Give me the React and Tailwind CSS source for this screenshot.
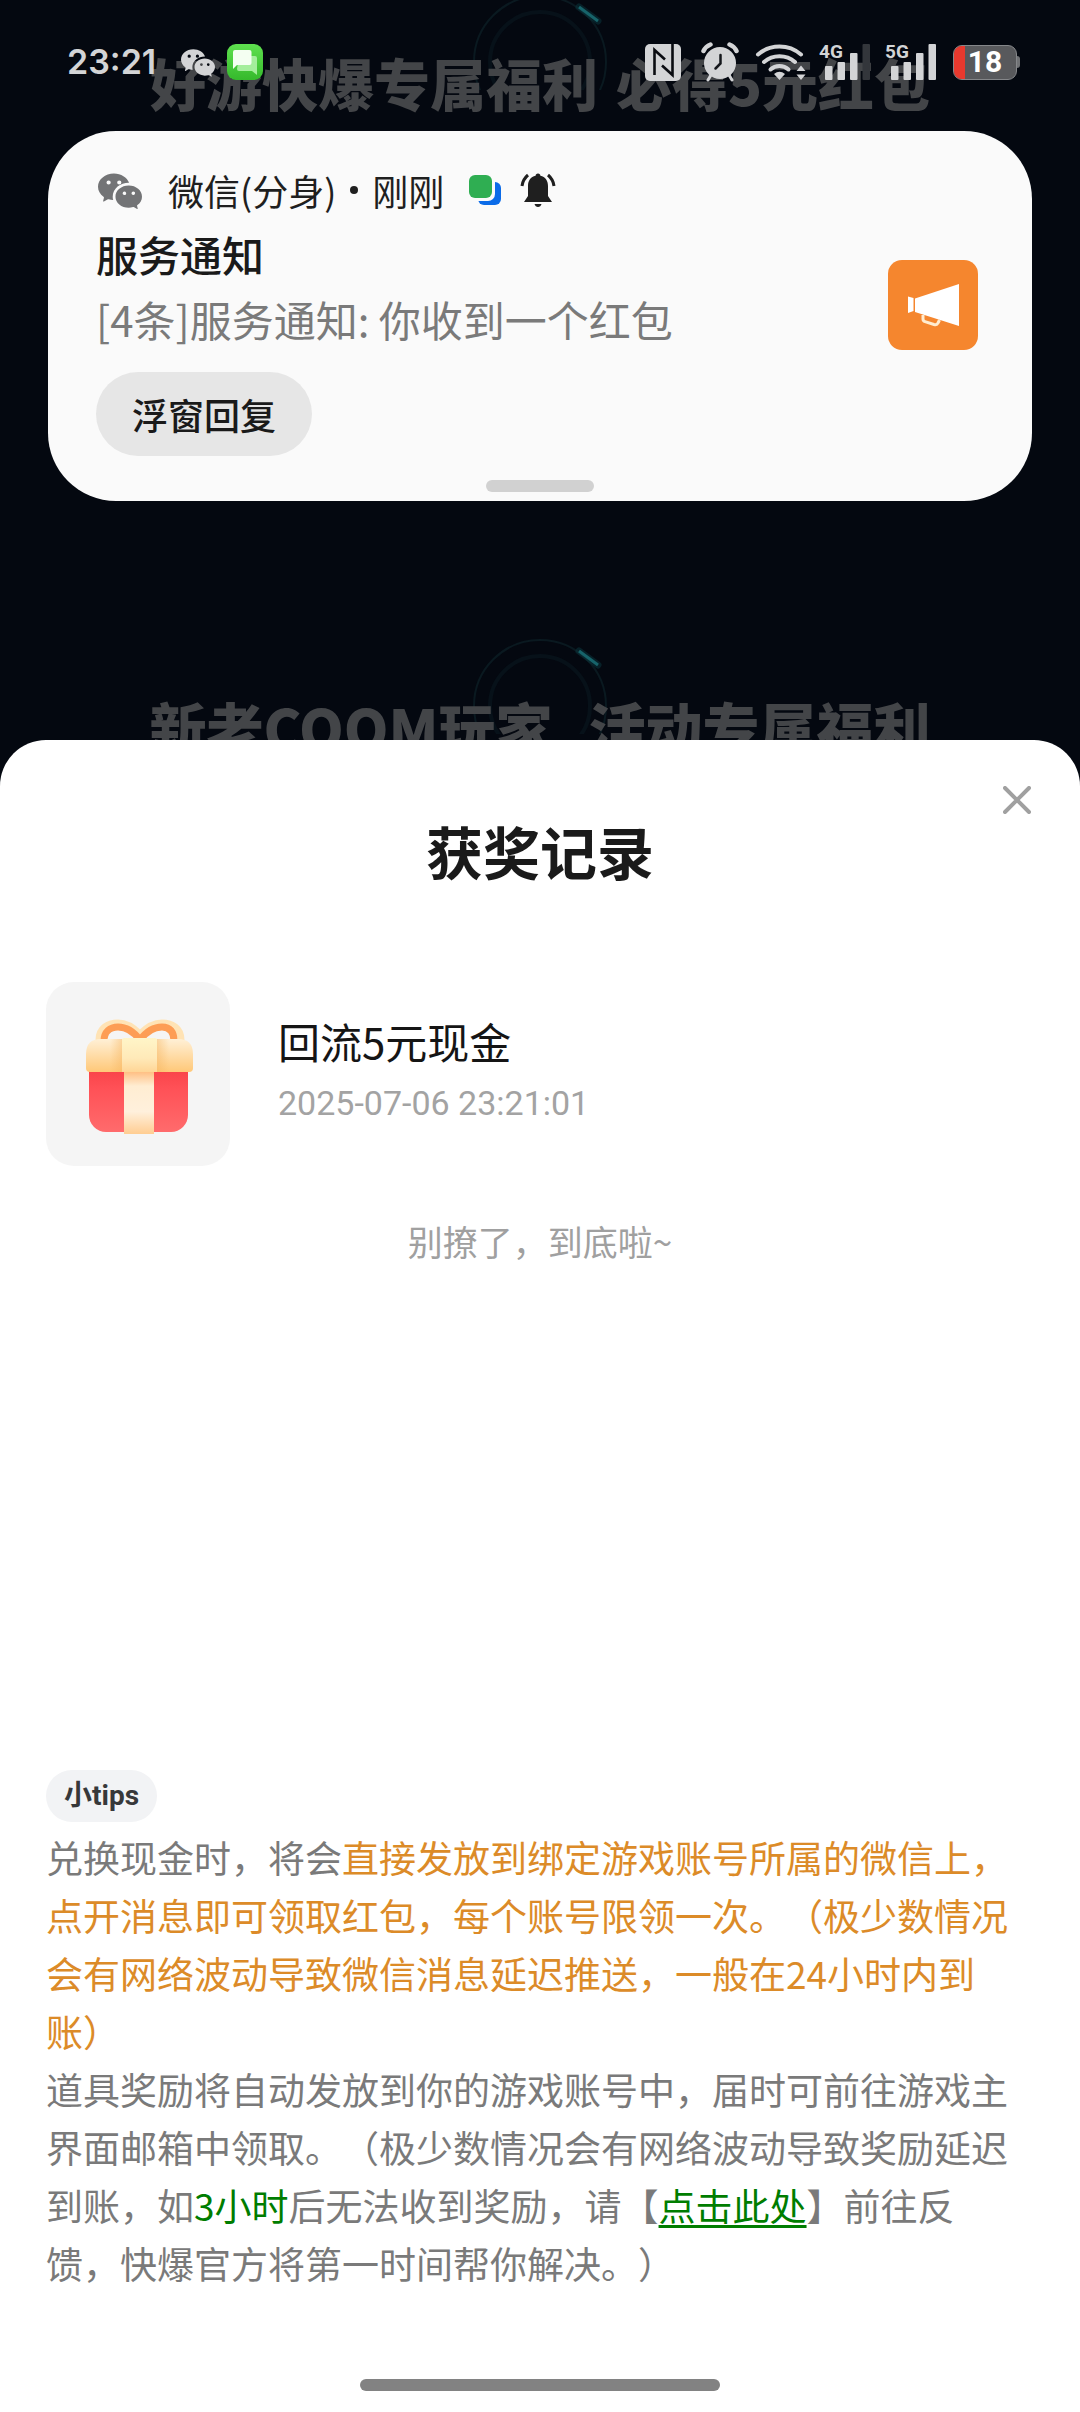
import React, { useState } from 'react';
import { BsWechat } from 'react-icons/bs';

const records = [
  { id: 1, name: '回流5元现金', time: '2025-07-06 23:21:01' },
];

function SmsIcon() {
  return (
    <svg viewBox="0 0 36 36" className="size-9" aria-hidden="true">
      <defs>
        <linearGradient id="sms" x1="0" y1="0" x2="0" y2="1">
          <stop offset="0" stopColor="#5fe04f" />
          <stop offset="1" stopColor="#35b92c" />
        </linearGradient>
      </defs>
      <rect width="36" height="36" rx="9" fill="url(#sms)" />
      <path d="M12 12h16a2 2 0 0 1 2 2v17l-5-4H12a2 2 0 0 1-2-2z" fill="#a4ee9c" />
      <path d="M8 6h14.500a2 2 0 0 1 2 2v11a2 2 0 0 1-2 2H10l-4 4V8a2 2 0 0 1 2-2z" fill="#f4fff2" />
    </svg>
  );
}

function NfcIcon() {
  return (
    <svg viewBox="0 0 36 37" className="h-[37px] w-9" aria-hidden="true">
      <rect width="36" height="37" rx="5" fill="#d3d4d6" />
      <path d="M9.500 31V6L20 15.500M27.500 0V31L17 21.500" fill="none" stroke="#0a0c11" strokeWidth="2.600" />
    </svg>
  );
}

function AlarmIcon() {
  return (
    <svg viewBox="0 0 38 40" className="h-10 w-[38px]" aria-hidden="true">
      <circle cx="19" cy="21" r="16" fill="#d3d4d6" />
      <path d="M2.500 9a13 13 0 0 1 7-6.500M35.500 9a13 13 0 0 0-7-6.500" fill="none" stroke="#d3d4d6" strokeWidth="4.500" strokeLinecap="round" />
      <path d="M10 33l-3 5M28 33l3 5" stroke="#d3d4d6" strokeWidth="3" strokeLinecap="round" />
      <path d="M19.500 13v8.500l-5 5" fill="none" stroke="#15171c" strokeWidth="2.500" strokeLinecap="round" />
    </svg>
  );
}

function WifiIcon() {
  return (
    <svg viewBox="0 0 52 38" className="h-[38px] w-[52px]" aria-hidden="true">
      <g fill="none" stroke="#d3d4d6" strokeWidth="4" strokeLinecap="round">
        <path d="M3 11.500a33 33 0 0 1 43 0" />
        <path d="M9 19a23.500 23.500 0 0 1 31 0" />
        <path d="M15.500 26.500a13 13 0 0 1 18 0" />
      </g>
      <path d="M24.500 37l-5.500-6q5.500-4.500 11 0z" fill="#d3d4d6" />
      <path d="M46 22.500l4.500 5.500h-9zM46 37l4.500-5.500h-9z" fill="#d3d4d6" />
    </svg>
  );
}

function SignalIcon({ label, bars }) {
  const heights = [14, 18, 27, 36];
  return (
    <svg viewBox="0 0 54 38" className="h-[38px] w-[54px]" role="img" aria-label={label}>
      {heights.map((h, i) => (
        <rect key={h} x={6 + i * 12.500} y={37 - h} width="7.500" height={h} rx="1" fill={i < bars ? '#d3d4d6' : '#33363b'} />
      ))}
      <text x="0" y="15" fill="#d3d4d6" className="font-['Roboto',sans-serif] text-[19px] font-bold">{label}</text>
    </svg>
  );
}

function Battery({ level }) {
  return (
    <div className="flex items-center">
      <div className="relative flex h-[35px] w-16 items-center justify-center overflow-hidden rounded-[9px] border border-[#85878a] bg-[#58595c]">
        <div className="absolute inset-y-0 left-0 bg-[#e8392e]" style={{ width: `${level}%` }} />
        <span className="relative font-['Roboto',sans-serif] text-[30px] leading-8 font-bold text-white">{level}</span>
      </div>
      <div className="h-3 w-[3px] rounded-r-sm bg-[#707275]" />
    </div>
  );
}

function StatusBar() {
  return (
    <div className="relative flex h-[124px] items-center justify-between pr-[60px] pl-[67px]">
      <div className="flex items-center">
        <span className="w-[90px] font-['Inter',sans-serif] text-[34px] leading-none font-semibold text-[#d3d4d6]">23:21</span>
        <BsWechat className="ml-6 size-[34px] text-[#d3d4d6]" />
        <span className="ml-3"><SmsIcon /></span>
      </div>
      <div className="flex items-center">
        <NfcIcon />
        <span className="ml-5"><AlarmIcon /></span>
        <span className="ml-4"><WifiIcon /></span>
        <span className="ml-3"><SignalIcon label="4G" bars={3} /></span>
        <span className="ml-3"><SignalIcon label="5G" bars={4} /></span>
        <span className="ml-[14px]"><Battery level={18} /></span>
      </div>
    </div>
  );
}

// dimmed section title of the activity page under the mask
function SectionTitle({ children, className }) {
  return (
    <div className={`absolute inset-x-0 flex justify-center ${className}`}>
      <svg viewBox="0 0 160 100" className="absolute -top-[60px] h-[100px] w-40" aria-hidden="true">
        <circle cx="80" cy="72" r="66" fill="none" stroke="#0a1920" strokeWidth="2" />
        <circle cx="80" cy="72" r="50" fill="none" stroke="#071119" strokeWidth="4" />
        <path d="M119 17l19 14" stroke="#0b3940" strokeWidth="7" opacity="0.5" strokeLinecap="round" />
        <path d="M119 17l19 14" stroke="#17636a" strokeWidth="3" />
      </svg>
      <p className="relative flex leading-[64px] font-black whitespace-nowrap text-[#434548]">{children}</p>
    </div>
  );
}

function DualAppIcon() {
  return (
    <svg viewBox="0 0 34 34" className="size-[34px]" aria-hidden="true">
      <rect x="10" y="9" width="23" height="23" rx="6" fill="#0b6be8" />
      <rect x="0" y="1" width="27" height="27" rx="7" fill="#fafafa" />
      <rect x="1" y="2" width="23" height="23" rx="6" fill="#2fae52" />
    </svg>
  );
}

function BellIcon() {
  return (
    <svg viewBox="0 0 36 36" className="size-9" aria-hidden="true">
      <path d="M18 1.500c1.600 0 2.300 1 2.400 2.200 5 1.200 7.600 4.800 7.600 10.300v10l4 6H4l4-6V14c0-5.500 2.600-9.100 7.600-10.300.1-1.200.8-2.200 2.400-2.200z" fill="#1f1f1f" />
      <path d="M14.500 32h7c-.6 2-1.800 3-3.500 3s-2.900-1-3.500-3z" fill="#1f1f1f" />
      <path d="M8 3C4.500 6 2.500 9.500 2 14M28 3c3.500 3 5.500 6.500 6 11" fill="none" stroke="#1f1f1f" strokeWidth="3" />
    </svg>
  );
}

function MegaphoneIcon() {
  return (
    <svg viewBox="0 0 90 90" className="size-[90px]" aria-hidden="true">
      <rect width="90" height="90" rx="14" fill="#f5862e" />
      <path d="M27 38.500L71 24v42L27 52z" fill="#fff" />
      <path d="M20 36.500l5.500 1.500v13L20 53z" fill="#fff" />
      <path d="M35 55v4q0 2 2 2.600l9 2.900q3 .8 4-1.500l1.500-3" fill="none" stroke="#ffeccf" strokeWidth="3" />
    </svg>
  );
}

function Notification() {
  return (
    <section className="relative mx-12 mt-[7px] rounded-[68px] bg-[#fafafa] px-12 pt-[35px] pb-[9px]">
      <div className="flex items-start justify-between">
        <div>
          <div className="flex h-12 items-center text-[36px] text-[#1f1f1f]">
            <BsWechat className="ml-0.5 size-11 text-[#737476]" />
            <span className="ml-[26px]">微信(分身)</span>
            <span className="mx-[14px] size-2 rounded-full bg-[#1f1f1f]" />
            <span>刚刚</span>
            <span className="ml-6"><DualAppIcon /></span>
            <span className="ml-[18px]"><BellIcon /></span>
          </div>
          <h2 className="mt-2 text-[42px] leading-[64px] font-medium text-[#1a1a1a]">服务通知</h2>
          <p className="text-[42px] leading-[66px] text-[#7a7a7a]">[4条]服务通知: 你收到一个红包</p>
          <button type="button" className="mt-5 h-[84px] rounded-full bg-[#e6e6e6] px-9 text-[36px] font-medium text-[#1a1a1a]">
            浮窗回复
          </button>
        </div>
        <div className="mt-[94px] mr-[6px]">
          <MegaphoneIcon />
        </div>
      </div>
      <div className="mx-auto mt-6 h-3 w-[108px] rounded-full bg-[#d1d1d1]" />
    </section>
  );
}

function GiftIcon() {
  return (
    <svg viewBox="0 0 184 184" className="size-[184px]" aria-hidden="true">
      <defs>
        <linearGradient id="lid" x1="0" y1="0" x2="0" y2="1">
          <stop offset="0" stopColor="#fff0d6" />
          <stop offset="1" stopColor="#ffc878" />
        </linearGradient>
        <linearGradient id="knot" x1="0" y1="0" x2="0" y2="1">
          <stop offset="0" stopColor="#fff5c8" />
          <stop offset="0.600" stopColor="#ffe9b8" />
          <stop offset="1" stopColor="#ffd596" />
        </linearGradient>
        <linearGradient id="box" x1="0" y1="0" x2="0" y2="1">
          <stop offset="0" stopColor="#f94349" />
          <stop offset="0.300" stopColor="#ff5157" />
          <stop offset="1" stopColor="#ff6b6c" />
        </linearGradient>
        <linearGradient id="ribbon" x1="0" y1="0" x2="0" y2="1">
          <stop offset="0" stopColor="#ffb979" />
          <stop offset="0.250" stopColor="#ffedd2" />
          <stop offset="0.650" stopColor="#fff0dc" />
          <stop offset="1" stopColor="#ffcd92" />
        </linearGradient>
        <linearGradient id="shade" x1="0" y1="0" x2="1" y2="0">
          <stop offset="0" stopColor="#f5b45f" stopOpacity="0" />
          <stop offset="1" stopColor="#f5b45f" stopOpacity="0.450" />
        </linearGradient>
      </defs>
      <path d="M53 58c0-12 9-17 19-17 9 0 16 5 22 11 6-6 13-11 22-11 10 0 19 5 19 17" fill="none" stroke="#ffe3b5" strokeWidth="7" />
      <path d="M58 59c0-9 6-14 14-14 9 0 16 5 22 13 6-8 13-13 22-13 8 0 12 5 12 14" fill="none" stroke="#fd9d55" strokeWidth="7" />
      <path d="M43 88h99v45a17 17 0 0 1-17 17H60a17 17 0 0 1-17-17z" fill="url(#box)" />
      <path d="M78 88h30v64H78z" fill="url(#ribbon)" />
      <path d="M40 72q0-15 15-15h77q15 0 15 15v14q0 4-4 4H44q-4 0-4-4z" fill="url(#lid)" />
      <path d="M64 57h12v33H64z" fill="url(#shade)" />
      <path d="M111 57h12v33h-12z" fill="url(#shade)" transform="rotate(180 117 73.500)" />
      <path d="M76 58q0-2 2-2h31q2 0 2 2v32H76z" fill="url(#knot)" />
    </svg>
  );
}

function RecordItem({ record }) {
  return (
    <li className="flex items-center gap-12">
      <div className="rounded-[28px] bg-[#f5f5f5]">
        <GiftIcon />
      </div>
      <div className="pb-1">
        <p className="text-[42px] leading-[62px] text-[#151515]">{record.name}</p>
        <p className="font-['Roboto',sans-serif] text-[34px] leading-[62px] text-[#a3a3a3]">{record.time}</p>
      </div>
    </li>
  );
}

function Tips() {
  return (
    <section className="mt-auto pr-[60px] pl-[46px]">
      <h2 className="flex h-[52px] w-fit items-center rounded-full bg-[#f2f3f5] px-[18px] font-['Roboto','Noto_Sans_CJK_SC',sans-serif] text-[28px] font-bold text-[#37383a]">
        小tips
      </h2>
      <div className="mt-[6px] text-[37px] leading-[58px] text-[#7a7a7a] [text-spacing-trim:space-all]">
        <p>
          兑换现金时，将会
          <span className="text-[#dc8b28]">
            直接发放到绑定游戏账号所属的微信上，点开消息即可领取红包，每个账号限领一次。（极少数情况会有网络波动导致微信消息延迟推送，一般在24小时内到账）
          </span>
        </p>
        <p>
          道具奖励将自动发放到你的游戏账号中，届时可前往游戏主界面邮箱中领取。（极少数情况会有网络波动导致奖励延迟到账，如
          <span className="text-[#007d00]">3小时</span>
          后无法收到奖励，请【
          <a href="#feedback" className="text-[#007d00] underline decoration-[3px] underline-offset-4">点击此处</a>
          】前往反馈，快爆官方将第一时间帮你解决。）
        </p>
      </div>
    </section>
  );
}

export default function App() {
  const [open, setOpen] = useState(true);

  return (
    <div className="relative flex min-h-screen flex-col overflow-hidden bg-[#040810] font-['Noto_Sans_CJK_SC',sans-serif]">
      <SectionTitle className="top-[50px] text-[56px]">
        <span>好游快爆专属福利</span>
        <span className="ml-[18px]">必得5元红包</span>
      </SectionTitle>
      <SectionTitle className="top-[694px] text-[57px]">
        <span>新老COOM玩家</span>
        <span className="ml-9">活动专属福利</span>
      </SectionTitle>

      <StatusBar />
      <Notification />

      {open && (
        <main className="relative mt-[239px] flex flex-1 flex-col rounded-t-[46px] bg-white">
          <div className="flex justify-end pt-[38px] pr-[41px]">
            <button type="button" aria-label="关闭" onClick={() => setOpen(false)} className="flex size-11 items-center justify-center">
              <svg viewBox="0 0 28 28" className="size-7" aria-hidden="true">
                <path d="M2 2l24 24M26 2L2 26" stroke="#a0a0a0" strokeWidth="4" strokeLinecap="round" />
              </svg>
            </button>
          </div>
          <h1 className="text-center text-[57px] leading-[56px] font-bold text-[#1a1a1a]">获奖记录</h1>
          <ul className="mt-[104px] px-[46px]">
            {records.map((record) => (
              <RecordItem key={record.id} record={record} />
            ))}
          </ul>
          <p className="mt-[50px] text-center text-[35px] leading-[50px] text-[#a0a0a0]">别撩了，到底啦~</p>
          <Tips />
          <div className="mx-auto mt-[87px] mb-[21px] h-3 w-1/3 rounded-full bg-[#828282]" />
        </main>
      )}
    </div>
  );
}
